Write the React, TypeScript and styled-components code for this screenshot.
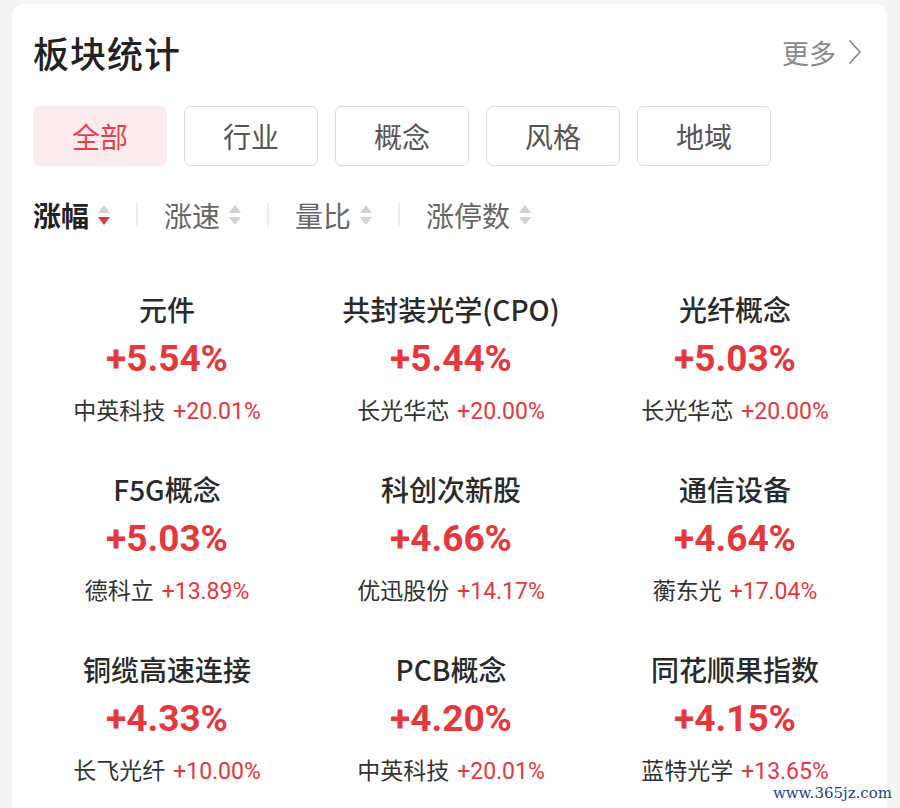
import React from "react";
import styled, { createGlobalStyle } from "styled-components";

type Sector = {
  name: string;
  change: string;
  stock: string;
  stockChange: string;
};

const tabs = ["全部", "行业", "概念", "风格", "地域"];
const sorts = ["涨幅", "涨速", "量比", "涨停数"];

const sectors: Array<Sector> = [
  { name: "元件", change: "+5.54%", stock: "中英科技", stockChange: "+20.01%" },
  { name: "共封装光学(CPO)", change: "+5.44%", stock: "长光华芯", stockChange: "+20.00%" },
  { name: "光纤概念", change: "+5.03%", stock: "长光华芯", stockChange: "+20.00%" },
  { name: "F5G概念", change: "+5.03%", stock: "德科立", stockChange: "+13.89%" },
  { name: "科创次新股", change: "+4.66%", stock: "优迅股份", stockChange: "+14.17%" },
  { name: "通信设备", change: "+4.64%", stock: "蘅东光", stockChange: "+17.04%" },
  { name: "铜缆高速连接", change: "+4.33%", stock: "长飞光纤", stockChange: "+10.00%" },
  { name: "PCB概念", change: "+4.20%", stock: "中英科技", stockChange: "+20.01%" },
  { name: "同花顺果指数", change: "+4.15%", stock: "蓝特光学", stockChange: "+13.65%" },
];

const SortArrows = ({ active }: { active: boolean }) => (
  <svg width="14" height="22" viewBox="0 0 14 22">
    <path d="M7 1 L13 9 L1 9 Z" fill="#d2d2d2" />
    <path d="M1 13 L13 13 L7 21 Z" fill={active ? "#e5383d" : "#d2d2d2"} />
  </svg>
);

export default function App() {
  return (
    <>
      <GlobalStyle />
      <Page>
        <Card>
          <Header>
            <Title>板块统计</Title>
            <More>
              更多
              <svg width="14" height="26" viewBox="0 0 14 26">
                <polyline
                  points="2,2 12,13 2,24"
                  fill="none"
                  stroke="#8a8a8a"
                  strokeWidth="1.8"
                  strokeLinecap="round"
                  strokeLinejoin="round"
                />
              </svg>
            </More>
          </Header>

          <Tabs>
            {tabs.map((t, i) => (
              <Tab key={t} active={i === 0}>
                {t}
              </Tab>
            ))}
          </Tabs>

          <SortBar>
            {sorts.map((s, i) => (
              <React.Fragment key={s}>
                {i > 0 && <Divider />}
                <SortItem active={i === 0}>
                  {s}
                  <SortArrows active={i === 0} />
                </SortItem>
              </React.Fragment>
            ))}
          </SortBar>

          <Grid>
            {sectors.map(s => (
              <Cell key={s.name}>
                <SectorName>{s.name}</SectorName>
                <Change>{s.change}</Change>
                <Leader>
                  {s.stock}
                  <LeaderChange>{s.stockChange}</LeaderChange>
                </Leader>
              </Cell>
            ))}
          </Grid>
        </Card>
        <Watermark>www.365jz.com</Watermark>
      </Page>
    </>
  );
}

const GlobalStyle = createGlobalStyle`
  html, body {
    margin: 0;
    padding: 0;
    overflow: hidden;
    background: #f4f4f4;
    font-family: "Noto Sans CJK SC", "Noto Sans", sans-serif;
  }
`;

const Page = styled.div`
  position: relative;
  height: 808px;
  overflow: hidden;
  padding: 4px 13px 0 12px;
  box-sizing: border-box;
`;

const Card = styled.div`
  background: #ffffff;
  border-radius: 12px 12px 0 0;
  padding: 22px 25px 0 21px;
  height: 804px;
  overflow: hidden;
  box-sizing: border-box;
`;

const Header = styled.div`
  display: flex;
  align-items: center;
  justify-content: space-between;
  height: 52px;
`;

const Title = styled.div`
  font-size: 36px;
  font-weight: 500;
  color: #222222;
  letter-spacing: 1px;
`;

const More = styled.div`
  display: flex;
  align-items: center;
  gap: 12px;
  font-size: 27px;
  color: #8a8a8a;
`;

const Tabs = styled.div`
  display: flex;
  gap: 17px;
  margin-top: 28px;
`;

const Tab = styled.div<{ active: boolean }>`
  width: 134px;
  height: 60px;
  box-sizing: border-box;
  display: flex;
  align-items: center;
  justify-content: center;
  border-radius: 7px;
  font-size: 28px;
  color: ${p => (p.active ? "#e0444a" : "#555555")};
  background: ${p => (p.active ? "#fcebec" : "#ffffff")};
  border: 1px solid ${p => (p.active ? "#fcebec" : "#dcdcdc")};
`;

const SortBar = styled.div`
  display: flex;
  align-items: center;
  height: 40px;
  margin-top: 29px;
`;

const SortItem = styled.div<{ active: boolean }>`
  display: flex;
  align-items: center;
  gap: 8px;
  font-size: 28px;
  font-weight: ${p => (p.active ? 700 : 400)};
  color: ${p => (p.active ? "#222222" : "#666666")};
`;

const Divider = styled.div`
  width: 2px;
  height: 24px;
  background: #ececec;
  margin: 0 26px 0 25px;
`;

const Grid = styled.div`
  display: grid;
  grid-template-columns: repeat(3, 284px);
  margin: 54px 0 0 -8px;
`;

const Cell = styled.div`
  display: flex;
  flex-direction: column;
  align-items: center;
  height: 180px;
`;

const SectorName = styled.div`
  font-size: 28px;
  font-weight: 500;
  line-height: 40px;
  color: #2a2a2a;
  white-space: nowrap;
`;

const Change = styled.div`
  margin-top: 5px;
  font-family: Roboto, "Noto Sans", sans-serif;
  font-size: 37px;
  font-weight: 700;
  line-height: 50px;
  color: #e5383d;
`;

const Leader = styled.div`
  margin-top: 10px;
  display: flex;
  align-items: baseline;
  gap: 8px;
  font-size: 23px;
  line-height: 30px;
  color: #333333;
`;

const LeaderChange = styled.span`
  font-family: Roboto, "Noto Sans", sans-serif;
  font-size: 23px;
  color: #e5383d;
`;

const Watermark = styled.div`
  position: absolute;
  right: 8px;
  bottom: 7px;
  font-family: "DejaVu Serif", serif;
  font-size: 15px;
  line-height: 15px;
  color: #1d3f8f;
`;
